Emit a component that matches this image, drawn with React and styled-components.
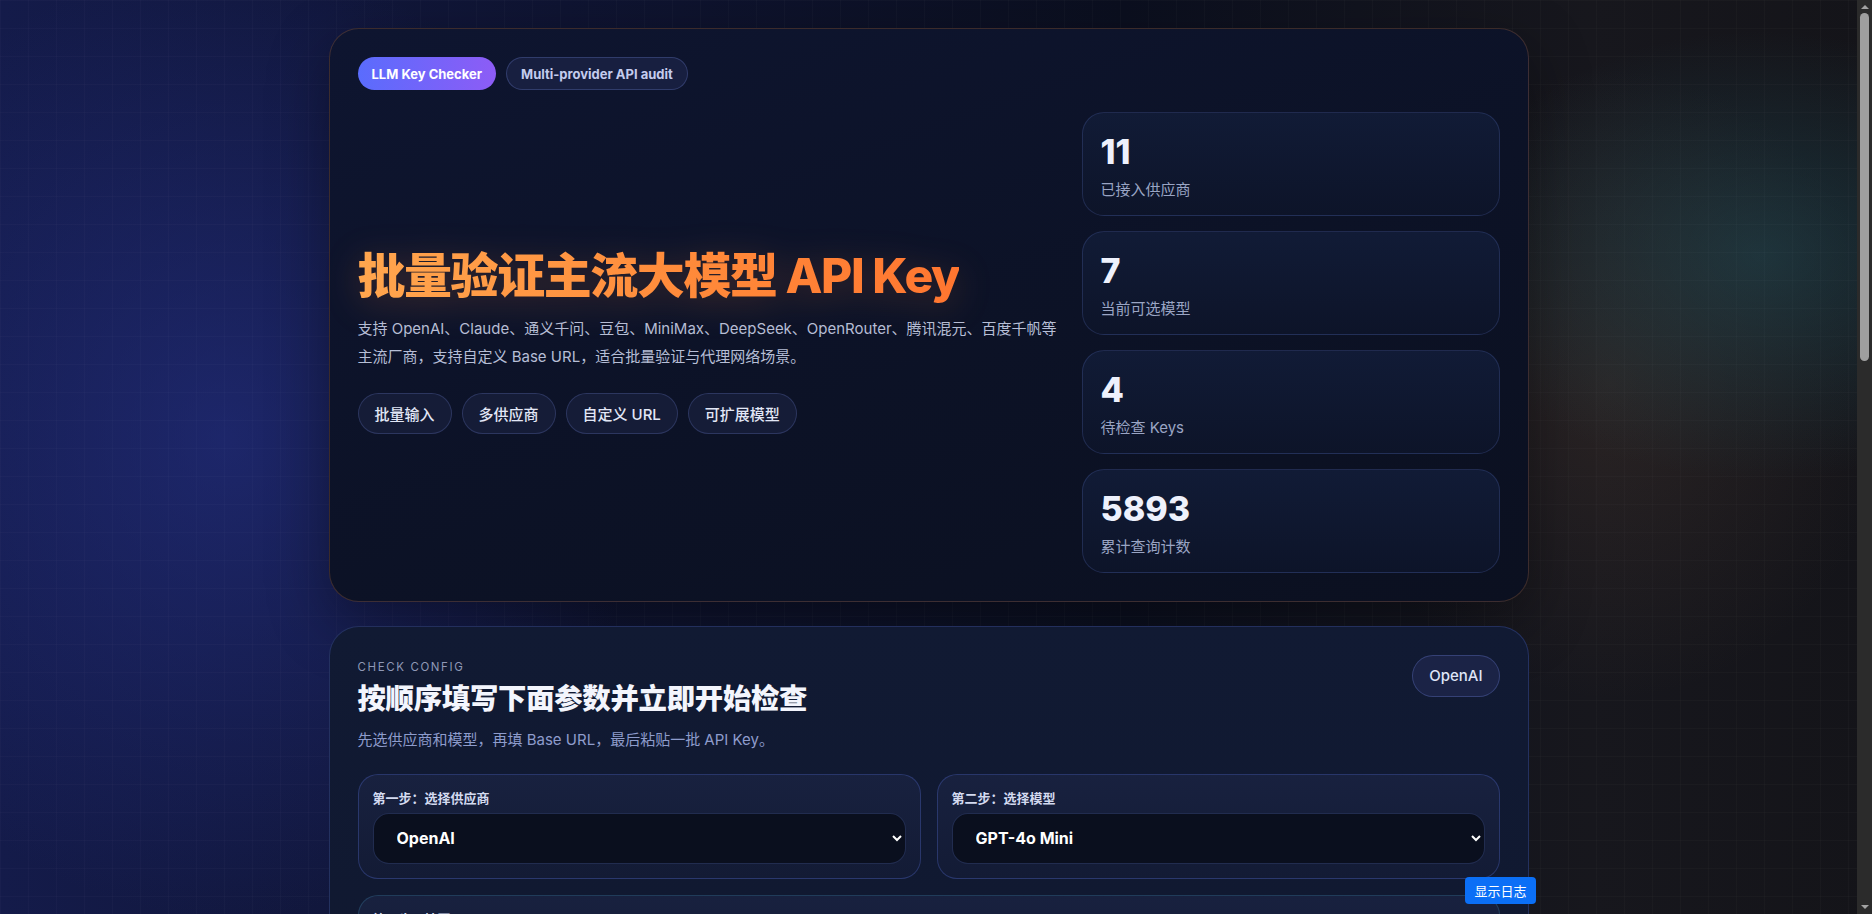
import React from "react";
import styled, { createGlobalStyle } from "styled-components";

const stats = [
  { value: "11", label: "已接入供应商" },
  { value: "7", label: "当前可选模型" },
  { value: "4", label: "待检查 Keys" },
  { value: "5893", label: "累计查询计数" },
];

const features = ["批量输入", "多供应商", "自定义 URL", "可扩展模型"];

const providers = [
  "OpenAI",
  "Claude",
  "通义千问",
  "豆包",
  "MiniMax",
  "DeepSeek",
  "OpenRouter",
  "腾讯混元",
  "百度千帆",
  "Gemini",
  "自定义",
];

const models = [
  "GPT-4o Mini",
  "GPT-4o",
  "GPT-4.1",
  "GPT-4.1 Mini",
  "o3-mini",
  "GPT-3.5 Turbo",
  "自定义模型",
];

const App = () => {
  return (
    <>
      <GlobalStyle />
      <Viewport>
        <Page>
          <HeroCard>
            <PillRow>
              <BrandPill>LLM Key Checker</BrandPill>
              <SubPill>Multi-provider API audit</SubPill>
            </PillRow>
            <HeroGrid>
              <HeroText>
                <HeroTitle>批量验证主流大模型 API Key</HeroTitle>
                <HeroDesc>
                  支持 OpenAI、Claude、通义千问、豆包、MiniMax、DeepSeek、OpenRouter、腾讯混元、百度千帆等主流厂商，支持自定义
                  Base URL，适合批量验证与代理网络场景。
                </HeroDesc>
                <TagRow>
                  {features.map((f) => (
                    <Tag key={f}>{f}</Tag>
                  ))}
                </TagRow>
              </HeroText>
              <StatList>
                {stats.map((s) => (
                  <StatCard key={s.label}>
                    <StatValue>{s.value}</StatValue>
                    <StatLabel>{s.label}</StatLabel>
                  </StatCard>
                ))}
              </StatList>
            </HeroGrid>
          </HeroCard>

          <ConfigCard>
            <ConfigHead>
              <div>
                <Eyebrow>CHECK CONFIG</Eyebrow>
                <SectionTitle>按顺序填写下面参数并立即开始检查</SectionTitle>
                <SectionDesc>
                  先选供应商和模型，再填 Base URL，最后粘贴一批 API Key。
                </SectionDesc>
              </div>
              <ProviderBadge>OpenAI</ProviderBadge>
            </ConfigHead>

            <StepGrid>
              <StepBox>
                <StepLabel>第一步：选择供应商</StepLabel>
                <Select defaultValue="OpenAI">
                  {providers.map((p) => (
                    <option key={p}>{p}</option>
                  ))}
                </Select>
              </StepBox>
              <StepBox>
                <StepLabel>第二步：选择模型</StepLabel>
                <Select defaultValue="GPT-4o Mini">
                  {models.map((m) => (
                    <option key={m}>{m}</option>
                  ))}
                </Select>
              </StepBox>
              <StepBox $wide $accent="teal">
                <StepLabel>第三步：填写 Base URL</StepLabel>
                <Input defaultValue="https://api.openai.com/v1" />
              </StepBox>
              <StepBox $wide>
                <StepLabel>第四步：粘贴 API Keys（每行一个）</StepLabel>
                <KeyArea
                  defaultValue={
                    "sk-proj-xxxxxxxxxxxxxxxxxxxx1\nsk-proj-xxxxxxxxxxxxxxxxxxxx2\nsk-proj-xxxxxxxxxxxxxxxxxxxx3\nsk-proj-xxxxxxxxxxxxxxxxxxxx4"
                  }
                />
              </StepBox>
            </StepGrid>

            <ActionRow>
              <PrimaryButton>开始检查</PrimaryButton>
              <GhostButton>清空输入</GhostButton>
            </ActionRow>
          </ConfigCard>

          <ConfigCard>
            <Eyebrow>RESULTS</Eyebrow>
            <SectionTitle>检查结果</SectionTitle>
            <SectionDesc>检查完成后，每个 Key 的状态、延迟与可用模型会显示在这里。</SectionDesc>
            <ResultEmpty>暂无检查结果</ResultEmpty>
          </ConfigCard>
        </Page>
      </Viewport>
      <ScrollRail>
        <RailArrow $dir="up" />
        <RailThumb />
        <RailArrow $dir="down" />
      </ScrollRail>
      <LogButton>显示日志</LogButton>
    </>
  );
};

const GlobalStyle = createGlobalStyle`
  html {
    color-scheme: dark;
  }
  body {
    margin: 0;
    overflow: hidden;
    font-family: Inter, "Noto Sans CJK SC", sans-serif;
    color: #e6eaf6;
    background-color: #0a0e1c;
    background-image:
      linear-gradient(rgba(255, 255, 255, 0.02) 1px, transparent 1px),
      linear-gradient(90deg, rgba(255, 255, 255, 0.02) 1px, transparent 1px),
      radial-gradient(ellipse 560px 640px at 12% 48%, rgba(38, 50, 140, 0.55), transparent 75%),
      radial-gradient(ellipse 420px 300px at 94% 28%, rgba(34, 84, 96, 0.45), transparent 75%),
      radial-gradient(ellipse 380px 420px at 86% 42%, rgba(110, 80, 60, 0.22), transparent 75%),
      linear-gradient(90deg, #141b4a 0%, #0f1432 30%, #0b0f1f 60%, #17171d 85%, #141419 100%);
    background-size: 28px 28px, 28px 28px, auto, auto, auto, auto;
    background-attachment: fixed;
  }
  * {
    box-sizing: border-box;
  }
`;

const Viewport = styled.div`
  height: 100vh;
  overflow-y: auto;
  padding-right: 15px;
`;

const Page = styled.main`
  max-width: 1200px;
  margin: 0 auto;
  padding: 28px 0 40px;
  display: flex;
  flex-direction: column;
  gap: 24px;
`;

const ScrollRail = styled.div`
  position: fixed;
  top: 0;
  right: 0;
  bottom: 0;
  width: 15px;
  display: flex;
  flex-direction: column;
  align-items: center;
  background: #2b2b2b;
  z-index: 20;
`;

const RailArrow = styled.div`
  width: 0;
  height: 0;
  margin: ${(p) => (p.$dir === "up" ? "5px 0 4px" : "auto 0 5px")};
  border-left: 4px solid transparent;
  border-right: 4px solid transparent;
  ${(p) =>
    p.$dir === "up"
      ? "border-bottom: 4px solid #a3a3a3;"
      : "border-top: 4px solid #a3a3a3;"}
`;

const RailThumb = styled.div`
  width: 9px;
  height: 348px;
  border-radius: 5px;
  background: #9f9f9f;
`;

const HeroCard = styled.section`
  padding: 28px;
  border-radius: 30px;
  border: 1px solid rgba(214, 128, 70, 0.24);
  background: linear-gradient(160deg, #0e1530 0%, #0c1226 55%, #0b1020 100%);
  box-shadow: 0 20px 60px rgba(0, 0, 0, 0.35);
`;

const PillRow = styled.div`
  display: flex;
  gap: 10px;
`;

const BrandPill = styled.span`
  display: inline-flex;
  align-items: center;
  height: 33px;
  padding: 0 14px;
  border-radius: 999px;
  background: linear-gradient(90deg, #5a6cfd, #8d5cf6);
  color: #ffffff;
  font-size: 13px;
  font-weight: 700;
`;

const SubPill = styled(BrandPill)`
  background: rgba(28, 36, 72, 0.7);
  border: 1px solid rgba(110, 128, 210, 0.3);
  color: #c4ccee;
`;

const HeroGrid = styled.div`
  display: grid;
  grid-template-columns: 1fr 418px;
  gap: 24px;
  align-items: center;
  margin-top: 22px;
`;

const HeroText = styled.div`
  display: flex;
  flex-direction: column;
`;

const HeroTitle = styled.h1`
  margin: 0;
  font-size: 48px;
  line-height: 1.1;
  font-weight: 800;
  letter-spacing: -0.03em;
  background: linear-gradient(90deg, #ffa64e 0%, #ff8a3a 55%, #ff7630 100%);
  -webkit-background-clip: text;
  background-clip: text;
  color: transparent;
  filter: drop-shadow(0 6px 18px rgba(255, 130, 50, 0.22));
  align-self: flex-start;
`;

const HeroDesc = styled.p`
  margin: 12px 0 0;
  font-size: 15px;
  line-height: 28px;
  color: #b6bed6;
`;

const TagRow = styled.div`
  display: flex;
  flex-wrap: wrap;
  gap: 10px;
  margin-top: 22px;
`;

const Tag = styled.span`
  display: inline-flex;
  align-items: center;
  height: 41px;
  padding: 0 16px;
  border-radius: 999px;
  background: #151c37;
  border: 1px solid rgba(104, 122, 200, 0.28);
  color: #e2e7f6;
  font-size: 15px;
  font-weight: 500;
`;

const StatList = styled.div`
  display: flex;
  flex-direction: column;
  gap: 15px;
`;

const StatCard = styled.div`
  padding: 20px 18px 13px;
  border-radius: 22px;
  border: 1px solid rgba(76, 96, 166, 0.3);
  background: linear-gradient(180deg, #111b36 0%, #0d1429 100%);
`;

const StatValue = styled.div`
  font-size: 34px;
  line-height: 1.1;
  font-weight: 800;
  color: #eef1fc;
`;

const StatLabel = styled.div`
  margin-top: 9px;
  font-size: 15px;
  line-height: 1.5;
  color: #9aa5c4;
`;

const ConfigCard = styled.section`
  padding: 28px;
  border-radius: 30px;
  border: 1px solid rgba(66, 86, 166, 0.4);
  background: linear-gradient(180deg, #111a33 0%, #0f172d 100%);
`;

const ConfigHead = styled.div`
  display: flex;
  justify-content: space-between;
  align-items: flex-start;
`;

const Eyebrow = styled.div`
  margin-top: 3px;
  font-size: 11.5px;
  line-height: 18px;
  letter-spacing: 0.14em;
  color: #8f98b6;
`;

const SectionTitle = styled.h2`
  margin: 3px 0 0;
  font-size: 28.4px;
  line-height: 39px;
  font-weight: 800;
  letter-spacing: -0.01em;
  color: #f3f5fd;
`;

const SectionDesc = styled.p`
  margin: 10px 0 0;
  font-size: 15px;
  line-height: 24px;
  color: #8e9ccc;
`;

const ProviderBadge = styled.span`
  display: inline-flex;
  align-items: center;
  height: 42px;
  padding: 0 16px;
  border-radius: 999px;
  background: #1b2346;
  border: 1px solid rgba(104, 124, 210, 0.35);
  color: #dfe5f7;
  font-size: 15px;
  font-weight: 500;
`;

const StepGrid = styled.div`
  display: grid;
  grid-template-columns: 1fr 1fr;
  gap: 16px;
  margin-top: 22px;
`;

const StepBox = styled.div`
  grid-column: ${(p) => (p.$wide ? "1 / -1" : "auto")};
  padding: 14px;
  border-radius: 20px;
  border: 1px solid
    ${(p) => (p.$accent === "teal" ? "rgba(44, 88, 120, 0.55)" : "rgba(58, 76, 150, 0.55)")};
  background: linear-gradient(180deg, #18213f 0%, #131b35 100%);
`;

const StepLabel = styled.div`
  font-size: 13px;
  line-height: 18px;
  font-weight: 700;
  color: #d3daf0;
`;

const fieldBase = `
  width: 100%;
  margin-top: 6px;
  border-radius: 16px;
  border: 1px solid rgba(62, 80, 140, 0.45);
  background: #0a0f1e;
  color: #ffffff;
  font-family: Inter, "Noto Sans CJK SC", sans-serif;
  outline: none;
`;

const Select = styled.select`
  ${fieldBase}
  height: 51px;
  padding: 0 8px 0 19px;
  font-size: 16px;
  font-weight: 700;
`;

const Input = styled.input`
  ${fieldBase}
  height: 51px;
  padding: 0 20px;
  font-size: 15px;
  font-weight: 500;
`;

const KeyArea = styled.textarea`
  ${fieldBase}
  display: block;
  height: 260px;
  padding: 16px 20px;
  font-size: 14px;
  line-height: 1.7;
  font-family: "DejaVu Sans Mono", monospace;
  resize: vertical;
`;

const ActionRow = styled.div`
  display: flex;
  gap: 12px;
  margin-top: 22px;
`;

const PrimaryButton = styled.button`
  height: 46px;
  padding: 0 26px;
  border: none;
  border-radius: 999px;
  background: linear-gradient(90deg, #5a6cfd, #8d5cf6);
  color: #ffffff;
  font-family: inherit;
  font-size: 15px;
  font-weight: 700;
`;

const GhostButton = styled(PrimaryButton)`
  background: #151c37;
  border: 1px solid rgba(104, 122, 200, 0.3);
  color: #d8def2;
`;

const ResultEmpty = styled.div`
  margin-top: 22px;
  height: 620px;
  display: flex;
  align-items: center;
  justify-content: center;
  border-radius: 20px;
  border: 1px dashed rgba(90, 110, 180, 0.4);
  color: #7d88a8;
  font-size: 15px;
`;

const LogButton = styled.button`
  position: fixed;
  left: 1465px;
  bottom: 10px;
  width: 71px;
  height: 27px;
  border: none;
  border-radius: 4px;
  background: #0b6ff6;
  color: #ffffff;
  font-family: Inter, "Noto Sans CJK SC", sans-serif;
  font-size: 13px;
  z-index: 10;
`;

export default App;
